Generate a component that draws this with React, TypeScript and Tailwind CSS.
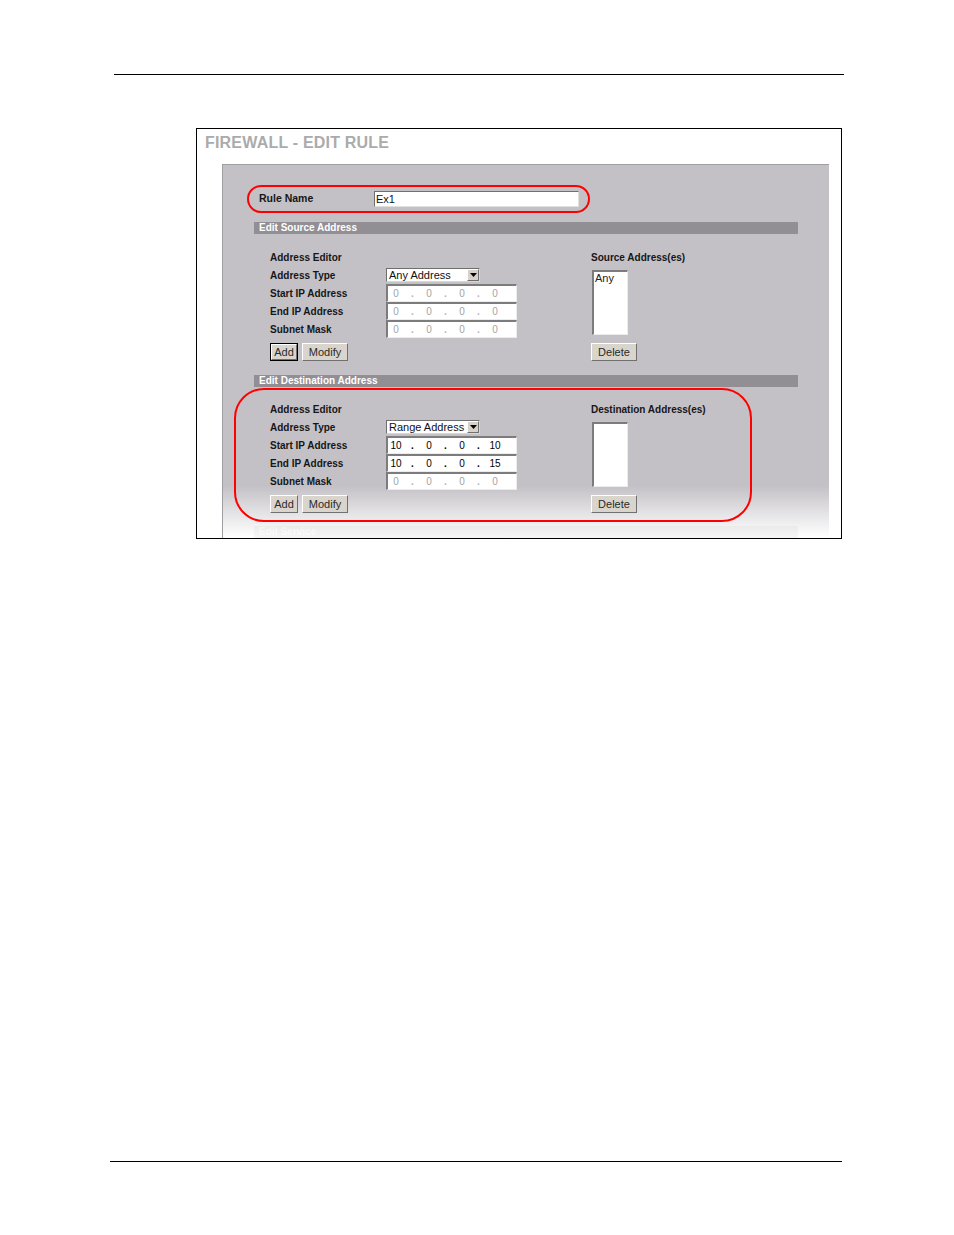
import React from "react";

const sans = "font-['Liberation_Sans',Arial,sans-serif]";

const Octets = ({ parts, on }: { parts: string[]; on: boolean }) => (
  <div className="w-[131px] h-[18px] bg-white border-t-2 border-l-2 border-b border-r border-t-[#7c7c7c] border-l-[#7c7c7c] border-b-[#ececec] border-r-[#ececec] flex items-center text-[10px] leading-none">
    {parts.map((p, i) => (
      <React.Fragment key={i}>
        {i > 0 && (
          <span
            className={`w-[17px] text-center font-bold ${on ? "text-black" : "text-[#b4b4b4]"}`}
          >
            .
          </span>
        )}
        <span className={`w-[16px] text-center ${on ? "text-black" : "text-[#a4a4a4]"}`}>{p}</span>
      </React.Fragment>
    ))}
  </div>
);

const TypeSelect = ({ value }: { value: string }) => (
  <div className="w-[94px] h-[14px] bg-white border border-t-[#6f6f6f] border-l-[#6f6f6f] border-b-[#d8d8d8] border-r-[#d8d8d8] flex items-center">
    <span className="flex-1 pl-[2px] text-[11px] leading-none text-[#111] whitespace-nowrap overflow-hidden">
      {value}
    </span>
    <span className="w-[12px] h-[12px] bg-[#d6d2ca] border border-t-white border-l-white border-b-[#6f6f6f] border-r-[#6f6f6f] flex items-center justify-center">
      <svg width="7" height="4" viewBox="0 0 7 4">
        <path d="M0 0h7L3.5 4z" fill="#000" />
      </svg>
    </span>
  </div>
);

const Btn = ({
  children,
  w,
  focus = false,
}: {
  children: React.ReactNode;
  w: string;
  focus?: boolean;
}) => (
  <div className={`${w} h-[18px] ${focus ? "border border-black" : ""}`}>
    <button
      className={`w-full h-full bg-[#d9d5cd] border border-t-white border-l-white border-b-[#707070] border-r-[#707070] text-[11px] leading-none text-[#2a2a2a] ${sans}`}
    >
      {children}
    </button>
  </div>
);

const SectionBar = ({ title, faded = false }: { title: string; faded?: boolean }) => (
  <div
    className={`ml-[31px] w-[544px] h-[12px] bg-[#918e94] flex items-center pl-[5px] text-[10px] font-bold text-white leading-none ${faded ? "opacity-[0.07]" : ""}`}
  >
    {title}
  </div>
);

type EditorProps = {
  type: string;
  start: string[];
  end: string[];
  rangeOn: boolean;
  listTitle: string;
  items: string[];
  focusAdd?: boolean;
};

const AddressEditor = ({ type, start, end, rangeOn, listTitle, items, focusAdd }: EditorProps) => {
  const rows: [string, React.ReactNode][] = [
    ["Address Type", <TypeSelect value={type} />],
    ["Start IP Address", <Octets parts={start} on={rangeOn} />],
    ["End IP Address", <Octets parts={end} on={rangeOn} />],
    ["Subnet Mask", <Octets parts={["0", "0", "0", "0"]} on={false} />],
  ];

  return (
    <div className="flex text-[10px] text-[#161616]">
      <div className="w-[321px] flex flex-col">
        <div className="h-[18px] flex items-center font-bold">Address Editor</div>
        {rows.map(([label, field]) => (
          <div key={label} className="h-[18px] flex items-center">
            <span className="w-[116px] font-bold">{label}</span>
            {field}
          </div>
        ))}
        <div className="mt-[5px] flex gap-[4px]">
          <Btn w="w-[28px]" focus={focusAdd}>
            Add
          </Btn>
          <Btn w="w-[46px]">Modify</Btn>
        </div>
      </div>
      <div className="flex flex-col">
        <div className="h-[18px] flex items-center font-bold">{listTitle}</div>
        <div className="ml-[1px] mt-[4px] w-[36px] h-[65px] bg-white border-t-2 border-l-2 border-b border-r border-t-[#7c7c7c] border-l-[#7c7c7c] border-b-[#ececec] border-r-[#ececec] pl-[1px] pt-[1px] text-[11px] leading-none text-[#222]">
          {items.map((it) => (
            <div key={it}>{it}</div>
          ))}
        </div>
        <div className="mt-[8px]">
          <Btn w="w-[46px]">Delete</Btn>
        </div>
      </div>
    </div>
  );
};

const App = () => {
  return (
    <div className={`w-[954px] h-[1235px] bg-white flex flex-col ${sans}`}>
      <div className="mt-[74px] ml-[114px] w-[730px] h-px bg-black" />

      <div className="mt-[53px] ml-[196px] w-[646px] h-[411px] border border-black flex flex-col">
        <div className="pt-[5px] pl-[8px] h-[23px] text-[16px] leading-[18px] font-bold text-[#ababab] tracking-[0.2px]">
          FIREWALL - EDIT RULE
        </div>

        <div className="mt-[12px] ml-[25px] w-[607px] flex-1 border-t border-l border-[#a19ea3] bg-[linear-gradient(to_bottom,#c4c1c6_0%,#c4c1c6_86%,#f3f3f4_97%,#ffffff_100%)] overflow-hidden flex flex-col">
          {/* rule name */}
          <div className="mt-[20px] ml-[24px] w-[343px] h-[28px] border-2 border-[#ff0000] rounded-full flex items-center pl-[10px]">
            <span className="w-[115px] text-[10.5px] font-bold text-[#161616]">Rule Name</span>
            <div className="w-[205px] h-[16px] bg-white border border-t-[#6f6f6f] border-l-[#6f6f6f] border-b-[#e0e0e0] border-r-[#e0e0e0] flex items-center pl-[1px] text-[11px] leading-none text-[#111]">
              Ex1
            </div>
          </div>

          <div className="mt-[9px]">
            <SectionBar title="Edit Source Address" />
          </div>

          <div className="pt-[14px] pl-[47px]">
            <AddressEditor
              type="Any Address"
              start={["0", "0", "0", "0"]}
              end={["0", "0", "0", "0"]}
              rangeOn={false}
              listTitle="Source Address(es)"
              items={["Any"]}
              focusAdd
            />
          </div>

          <div className="mt-[14px]">
            <SectionBar title="Edit Destination Address" />
          </div>

          {/* highlighted destination block */}
          <div className="mt-[1px] ml-[11px] w-[518px] h-[134px] border-2 border-[#ff0000] rounded-[30px] pt-[10px] pl-[34px]">
            <AddressEditor
              type="Range Address"
              start={["10", "0", "0", "10"]}
              end={["10", "0", "0", "15"]}
              rangeOn
              listTitle="Destination Address(es)"
              items={[]}
            />
          </div>

          <div className="mt-[4px]">
            <SectionBar title="Edit Service" faded />
          </div>
        </div>
      </div>

      <div className="mt-[622px] ml-[110px] w-[732px] h-px bg-black" />
    </div>
  );
};

export default App;
